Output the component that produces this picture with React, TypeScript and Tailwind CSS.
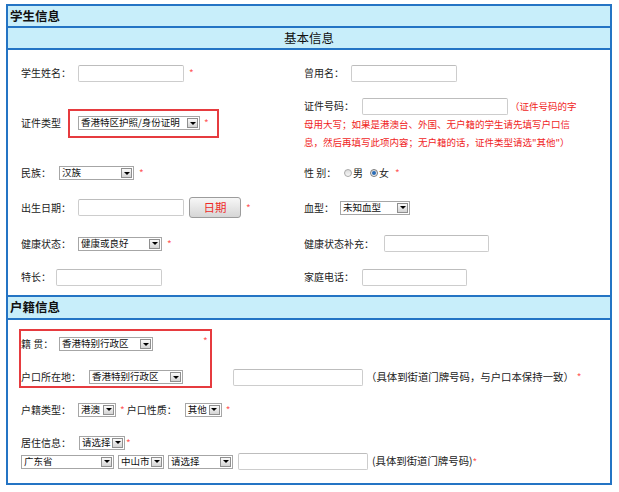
import clsx from "clsx";

function Field({ className }: { className: string }) {
  return (
    <input
      type="text"
      className={clsx(
        "h-[17px] shrink-0 rounded-[2px] border border-[#cdcdcd] border-t-[#bdbdbd] bg-white outline-none",
        className
      )}
    />
  );
}

function Select({ className, value }: { className: string; value: string }) {
  return (
    <div className={clsx("flex h-[14px] shrink-0 items-center border border-[#a6a6a6] bg-white", className)}>
      <span className="min-w-0 flex-1 whitespace-nowrap pl-[2px] text-[9.5px] leading-none text-[#111]">
        {value}
      </span>
      <span className="m-px flex h-[10px] w-[11px] shrink-0 items-center justify-center border border-[#8f8f8f] bg-linear-to-b from-[#fafafa] to-[#d4d4d4]">
        <span className="h-0 w-0 border-x-[3px] border-t-[3px] border-x-transparent border-t-black" />
      </span>
    </div>
  );
}

function Star({ className }: { className?: string }) {
  return <span className={clsx("text-[10px] leading-none text-[#ff5a5a]", className)}>*</span>;
}

function Radio({ checked }: { checked?: boolean }) {
  return (
    <span
      className={clsx(
        "flex h-[8px] w-[8px] shrink-0 items-center justify-center rounded-full border bg-linear-to-b from-[#dcdcdc] to-[#f7f7f7]",
        checked ? "border-[#7a7a7a]" : "border-[#a8a8a8]"
      )}
    >
      {checked && <span className="h-[4px] w-[4px] rounded-full bg-[#2a6cb6]" />}
    </span>
  );
}

function Label({ className, children }: { className: string; children: React.ReactNode }) {
  return <span className={clsx("shrink-0 whitespace-nowrap text-[10px] leading-none", className)}>{children}</span>;
}

function Row({
  className,
  left,
  right,
}: {
  className: string;
  left: React.ReactNode;
  right: React.ReactNode;
}) {
  return (
    <div className={clsx("flex", className)}>
      <div className="flex w-[296px] items-center pl-[13px]">{left}</div>
      <div className="flex flex-1 items-center">{right}</div>
    </div>
  );
}

export default function App() {
  return (
    <div className="h-[492px] w-[619px] bg-white pl-[6px] pt-[4px] font-['Noto_Sans_CJK_SC','Liberation_Sans',sans-serif] text-[#222]">
      <div className="w-[606px] border-2 border-[#2474c4]">
        {/* 学生信息 */}
        <div className="flex h-[22px] items-center border-b-2 border-[#2474c4] bg-[#c8eefa] pl-[2px] text-[12.5px] font-bold leading-none text-[#111]">
          学生信息
        </div>
        <div className="flex h-[22px] items-center justify-center border-b-2 border-[#2474c4] bg-[#c8eefa] text-[12.5px] leading-none text-[#111]">
          基本信息
        </div>
        <div className="h-[247px] border-b-2 border-[#2474c4]">
          <Row
            className="h-[46px]"
            left={
              <>
                <Label className="w-[57px]">学生姓名：</Label>
                <Field className="w-[106px]" />
                <Star className="ml-[5px]" />
              </>
            }
            right={
              <>
                <Label className="w-[47px]">曾用名：</Label>
                <Field className="w-[106px]" />
              </>
            }
          />
          <div className="flex h-[54px]">
            <div className="flex w-[296px] items-center pl-[13px]">
              <Label className="w-[47px]">证件类型</Label>
              <div className="flex h-[29px] w-[151px] items-center border-2 border-[#e63b3f] pl-[8px]">
                <Select className="w-[122px]" value="香港特区护照/身份证明" />
                <Star className="ml-[4px]" />
              </div>
            </div>
            <div className="flex flex-1 flex-col pt-[1px] text-[9.5px] leading-[18px] text-[#f01e1e]">
              <div className="flex h-[18px] items-center">
                <Label className="w-[58px] text-[#222]">证件号码：</Label>
                <Field className="w-[146px]" />
                <span className="ml-[2px] whitespace-nowrap">（证件号码的字</span>
              </div>
              <div className="whitespace-nowrap">母用大写；如果是港澳台、外国、无户籍的学生请先填写户口信</div>
              <div className="whitespace-nowrap">息，然后再填写此项内容；无户籍的话，证件类型请选"其他"）</div>
            </div>
          </div>
          <Row
            className="h-[46px]"
            left={
              <>
                <Label className="w-[38px]">民族：</Label>
                <Select className="w-[75px]" value="汉族" />
                <Star className="ml-[5px]" />
              </>
            }
            right={
              <>
                <Label className="w-[40px]">性 别：</Label>
                <Radio />
                <span className="ml-[1px] text-[10px] leading-none">男</span>
                <span className="ml-[7px]">
                  <Radio checked />
                </span>
                <span className="ml-[1px] text-[10px] leading-none">女</span>
                <Star className="ml-[6px]" />
              </>
            }
          />
          <Row
            className="h-[23px]"
            left={
              <>
                <Label className="w-[57px]">出生日期：</Label>
                <Field className="w-[106px]" />
                <button className="ml-[5px] h-[21px] w-[52px] shrink-0 rounded-[3px] border border-[#9c9c9c] bg-linear-to-b from-[#f7f7f7] to-[#d6d6d6] text-[11.5px] leading-none text-[#ee2a2a]">
                  日期
                </button>
                <Star className="ml-[5px]" />
              </>
            }
            right={
              <>
                <Label className="w-[36px]">血型：</Label>
                <Select className="w-[70px]" value="未知血型" />
              </>
            }
          />
          <Row
            className="h-[49px]"
            left={
              <>
                <Label className="w-[57px]">健康状态：</Label>
                <Select className="w-[84px]" value="健康或良好" />
                <Star className="ml-[5px]" />
              </>
            }
            right={
              <>
                <Label className="w-[80px]">健康状态补充：</Label>
                <Field className="w-[105px]" />
              </>
            }
          />
          <Row
            className="h-[18px]"
            left={
              <>
                <Label className="w-[35px]">特长：</Label>
                <Field className="w-[106px]" />
              </>
            }
            right={
              <>
                <Label className="w-[58px]">家庭电话：</Label>
                <Field className="w-[105px]" />
              </>
            }
          />
        </div>

        {/* 户籍信息 */}
        <div className="flex h-[23px] items-center border-b-2 border-[#2474c4] bg-[#c8eefa] pl-[2px] text-[12.5px] font-bold leading-none text-[#111]">
          户籍信息
        </div>
        <div className="h-[163px] pl-[11px] pt-[9px]">
          <div className="flex items-start">
            <div className="flex h-[59px] w-[193px] flex-col border-2 border-[#e63b3f]">
              <div className="flex h-[26px] items-center">
                <Label className="w-[38px]">籍 贯：</Label>
                <Select className="w-[94px]" value="香港特别行政区" />
                <Star className="mb-[6px] ml-[50px]" />
              </div>
              <div className="mt-[11px] flex h-[18px] items-center">
                <Label className="w-[68px]">户口所在地：</Label>
                <Select className="w-[94px]" value="香港特别行政区" />
              </div>
            </div>
            <div className="ml-[21px] mt-[39px] flex h-[18px] items-center">
              <Field className="w-[130px]" />
              <span className="ml-[3px] whitespace-nowrap text-[10.4px] leading-none">
                （具体到街道门牌号码，与户口本保持一致）
              </span>
              <Star className="ml-[3px]" />
            </div>
          </div>
          <div className="mt-[11px] flex h-[21px] items-center pl-[2px]">
            <Label className="w-[57px]">户籍类型：</Label>
            <Select className="w-[38px]" value="港澳" />
            <Star className="ml-[4px]" />
            <Label className="ml-[2px] w-[58px]">户口性质：</Label>
            <Select className="w-[37px]" value="其他" />
            <Star className="ml-[4px]" />
          </div>
          <div className="mt-[12px] flex h-[21px] items-center pl-[2px]">
            <Label className="w-[58px]">居住信息：</Label>
            <Select className="w-[46px]" value="请选择" />
            <Star className="ml-[1px]" />
          </div>
          <div className="flex h-[17px] items-center pl-[2px]">
            <Select className="w-[93px]" value="广东省" />
            <Select className="ml-[4px] w-[46px]" value="中山市" />
            <Select className="ml-[4px] w-[65px]" value="请选择" />
            <Field className="ml-[5px] w-[130px]" />
            <span className="ml-[4px] whitespace-nowrap text-[10.4px] leading-none">(具体到街道门牌号码)</span>
            <Star />
          </div>
        </div>
      </div>
    </div>
  );
}
